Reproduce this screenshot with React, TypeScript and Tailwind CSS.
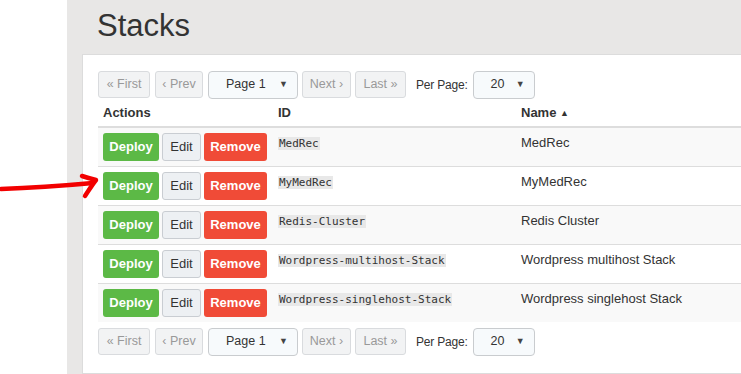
import React from 'react';

const stacks = [
  { id: 'MedRec', name: 'MedRec' },
  { id: 'MyMedRec', name: 'MyMedRec' },
  { id: 'Redis-Cluster', name: 'Redis Cluster' },
  { id: 'Wordpress-multihost-Stack', name: 'Wordpress multihost Stack' },
  { id: 'Wordpress-singlehost-Stack', name: 'Wordpress singlehost Stack' },
];

const PagerButton = ({ children, w }: { children: React.ReactNode; w: string }) => (
  <button
    className={`${w} h-[27px] rounded-[3px] border border-[#d9dbde] bg-[#f2f3f4] text-[12.5px] text-[#999] flex items-center justify-center`}
  >
    {children}
  </button>
);

const Select = ({ label, w }: { label: string; w: string }) => (
  <div
    className={`${w} h-[28px] rounded-[4px] border border-[#c9cccf] bg-[#f7fafc] flex items-center justify-between pl-[17px] pr-[9px] text-[12.5px] text-[#333]`}
  >
    <span>{label}</span>
    <span className="text-[9px] text-[#444]">▼</span>
  </div>
);

const Pager = () => (
  <div className="flex items-center h-[29px]">
    <PagerButton w="w-[52px]">« First</PagerButton>
    <div className="w-[5px]" />
    <PagerButton w="w-[48px]">‹ Prev</PagerButton>
    <div className="w-[5px]" />
    <Select label="Page 1" w="w-[90px]" />
    <div className="w-[4px]" />
    <PagerButton w="w-[49px]">Next ›</PagerButton>
    <div className="w-[4px]" />
    <PagerButton w="w-[51px]">Last »</PagerButton>
    <span className="ml-[10px] mr-[5px] text-[12px] tracking-[-0.2px] text-[#333]">Per Page:</span>
    <Select label="20" w="w-[62px]" />
  </div>
);

export default function App() {
  return (
    <div
      className="relative flex w-[741px] h-[374px] overflow-hidden bg-white"
      style={{ fontFamily: '"Liberation Sans", Arial, sans-serif' }}
    >
      <div className="w-[67px] shrink-0 bg-white" />
      <div className="flex-1 flex flex-col bg-[#e8e7e6] pl-[15px]">
        <div className="h-[54px] shrink-0 flex items-center pl-[15px] pb-[4px]">
          <h1 className="text-[31px] text-[#333] leading-none">Stacks</h1>
        </div>
        <div className="flex-1 w-[700px] bg-white border border-[#dcdcdc] pl-[15px] pt-[15px]">
          <Pager />
          <table className="w-[660px] border-collapse text-[13px] text-[#333]">
            <thead>
              <tr className="h-[28px] border-b-2 border-[#dddddd]">
                <th className="w-[175px] text-left font-bold pl-[5px]">Actions</th>
                <th className="w-[243px] text-left font-bold pl-[5px]">ID</th>
                <th className="text-left font-bold pl-[5px]">
                  Name <span className="text-[9px] align-[1px]">▲</span>
                </th>
              </tr>
            </thead>
            <tbody>
              {stacks.map((s, i) => (
                <tr
                  key={s.id}
                  className={`h-[39px] border-t border-[#dddddd] ${i % 2 === 0 ? 'bg-[#f9f9f9]' : 'bg-white'}`}
                >
                  <td className="pl-[5px] align-middle">
                    <div className="flex items-center gap-[3px]">
                      <button className="w-[56px] h-[28px] rounded-[3px] bg-[#5cb946] text-white font-bold text-[13px]">
                        Deploy
                      </button>
                      <button className="w-[39px] h-[28px] rounded-[3px] border border-[#c9cdd2] bg-[#edf0f3] text-[#333] text-[13px]">
                        Edit
                      </button>
                      <button className="w-[63px] h-[28px] rounded-[3px] bg-[#f04b37] text-white font-bold text-[13px]">
                        Remove
                      </button>
                    </div>
                  </td>
                  <td className="pl-[5px] align-top pt-[5px]">
                    <code
                      className="bg-[#e8e8e8] px-[1px] text-[11px] text-[#333]"
                      style={{ fontFamily: '"DejaVu Sans Mono", monospace' }}
                    >
                      {s.id}
                    </code>
                  </td>
                  <td className="pl-[5px] align-top pt-[5px]">{s.name}</td>
                </tr>
              ))}
            </tbody>
          </table>
          <div className="h-[5px]" />
          <Pager />
        </div>
      </div>
      <svg
        className="absolute left-0 top-[170px]"
        width="110"
        height="32"
        viewBox="0 0 110 32"
        fill="none"
      >
        <path
          d="M1 19 C 30 18, 60 16, 93 13"
          stroke="#f20000"
          strokeWidth="4.5"
          strokeLinecap="round"
        />
        <path
          d="M82 6 C 88 8, 92 9, 96 10 C 92 15, 89 20, 85 26"
          stroke="#f20000"
          strokeWidth="4.5"
          strokeLinecap="round"
          strokeLinejoin="round"
        />
      </svg>
    </div>
  );
}
